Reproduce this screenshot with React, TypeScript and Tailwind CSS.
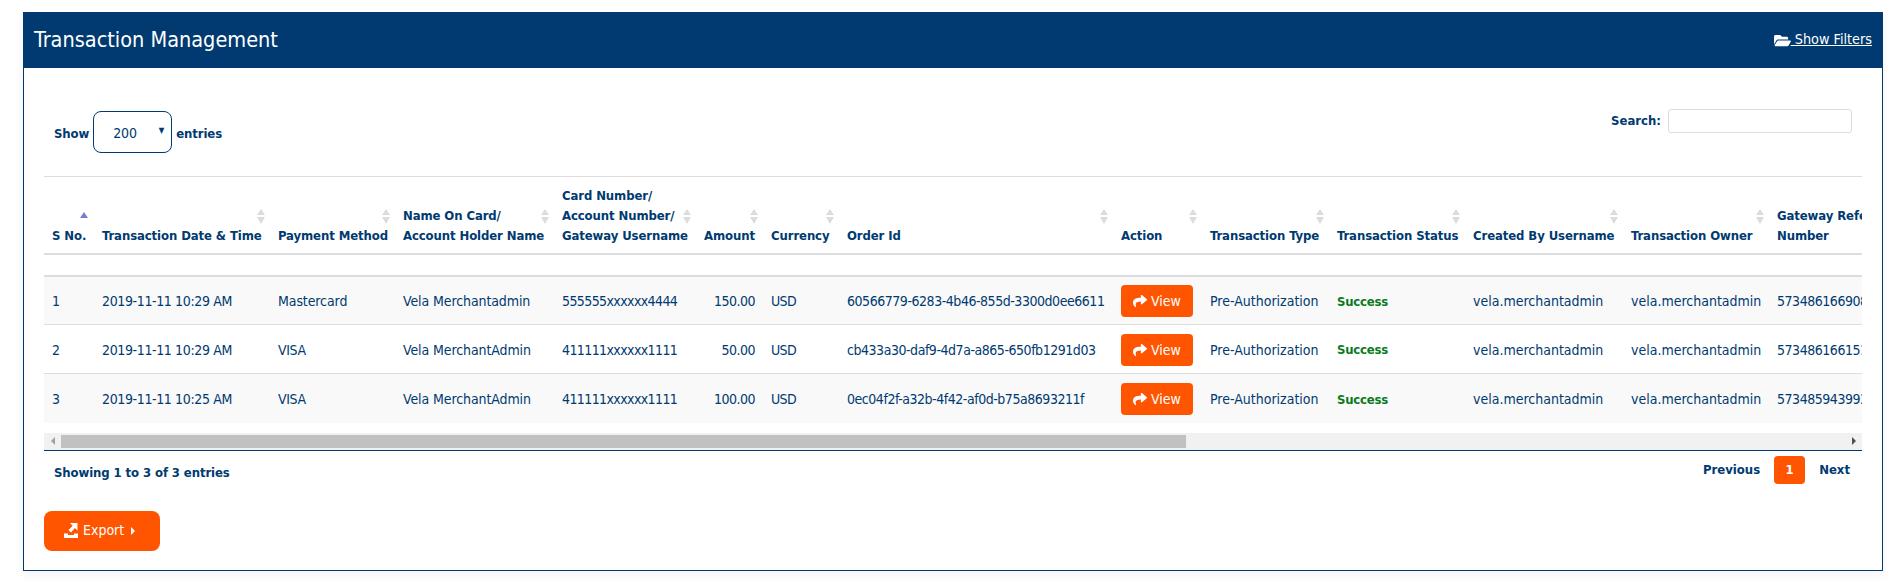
import { FaFolderOpen, FaShare } from "react-icons/fa";

const cols = [
  { w: "w-[50px]", label: ["S No."], active: true },
  { w: "w-[176px]", label: ["Transaction Date & Time"] },
  { w: "w-[125px]", label: ["Payment Method"] },
  { w: "w-[159px]", label: ["Name On Card/", "Account Holder Name"] },
  { w: "w-[142px]", label: ["Card Number/", "Account Number/", "Gateway Username"] },
  { w: "w-[67px]", label: ["Amount"] },
  { w: "w-[76px]", label: ["Currency"] },
  { w: "w-[274px]", label: ["Order Id"] },
  { w: "w-[89px]", label: ["Action"] },
  { w: "w-[127px]", label: ["Transaction Type"] },
  { w: "w-[136px]", label: ["Transaction Status"] },
  { w: "w-[158px]", label: ["Created By Username"] },
  { w: "w-[146px]", label: ["Transaction Owner"] },
  { w: "w-[93px]", label: ["Gateway Reference", "Number"], noIcon: true },
];

const rows = [
  ["1", "2019-11-11 10:29 AM", "Mastercard", "Vela Merchantadmin", "555555xxxxxx4444", "150.00", "60566779-6283-4b46-855d-3300d0ee6611", "573486166908"],
  ["2", "2019-11-11 10:29 AM", "VISA", "Vela MerchantAdmin", "411111xxxxxx1111", "50.00", "cb433a30-daf9-4d7a-a865-650fb1291d03", "573486166151"],
  ["3", "2019-11-11 10:25 AM", "VISA", "Vela MerchantAdmin", "411111xxxxxx1111", "100.00", "0ec04f2f-a32b-4f42-af0d-b75a8693211f", "573485943993"],
];

const cell = "px-2 whitespace-nowrap overflow-hidden";
const td = `${cell} pt-[2px] text-[14px]`;

function ExportIcon() {
  return (
    <svg viewBox="0 0 14 15" className="w-[14px] h-[15px]" fill="#fff">
      <path d="M0 10.5h4v1.5h6v-1.5h4V15H0z" />
      <path d="M6 0h7.5v7.5l-2.6-2.6L7 9.5 4.5 7l4.2-4.3z" />
    </svg>
  );
}

export default function App() {
  return (
    <div className="min-h-[583px] bg-white pt-3 pl-[23px] pr-[16px] text-[13px] text-[#003a70] font-['DejaVu_Sans_Condensed','DejaVu_Sans',sans-serif]">
      <div className="shadow-[0_4px_10px_rgba(0,0,0,0.05)]">
        <div className="h-14 bg-[#003a70] flex items-center justify-between pl-[11px] pr-[11px] text-white">
          <div className="text-[21.5px] leading-none">Transaction Management</div>
          <a className="flex items-center gap-0 text-[14.3px]">
            <FaFolderOpen className="w-[17px] h-[15px]" />
            <span className="underline whitespace-pre"> Show Filters</span>
          </a>
        </div>
        <div className="border-x border-b border-[#003a70] h-[503px] pl-5 pr-5">
          <div className="h-[108px] flex items-start justify-between pl-[10px] pr-[10px]">
            <div className="flex items-center gap-1 font-bold mt-[43px] tracking-[-0.1px]">
              <span className="pt-[3px]">Show</span>
              <div className="relative w-[79px] h-[42px] border border-[#003a70] rounded-lg flex items-center pl-[19px] pt-[2px] font-normal text-[14px]">
                200
                <span className="absolute right-[7px] top-[15px] text-[8px] leading-none">▼</span>
              </div>
              <span className="pt-[3px]">entries</span>
            </div>
            <div className="flex items-center gap-[7px] font-bold mt-[41px]">
              <span>Search:</span>
              <input className="w-[184px] h-6 border border-[#dddddd] rounded-[3px] bg-white" />
            </div>
          </div>

          <div className="w-[1818px] overflow-hidden">
            <table className="table-fixed border-collapse w-[1818px]">
              <thead>
                <tr className="h-[77px] border-t border-[#dddddd]">
                  {cols.map((c, i) => (
                    <th key={i} className={`${c.w} ${cell} relative align-bottom pb-[7px] text-left font-bold leading-5 tracking-[-0.1px]`}>
                      {c.label.map((l) => (
                        <div key={l}>{l}</div>
                      ))}
                      {c.active ? (
                        <svg viewBox="0 0 8 6" className="absolute top-[35px] left-[36px] w-2 h-[6px]">
                          <path d="M4 0l4 6H0z" fill="#7b7bd6" />
                        </svg>
                      ) : c.noIcon ? null : (
                        <svg viewBox="0 0 8 15" className="absolute top-[32px] right-[5px] w-2 h-[15px]">
                          <path d="M4 0l4 6H0z M4 15L0 8h8z" fill="#dcdcdc" />
                        </svg>
                      )}
                    </th>
                  ))}
                </tr>
              </thead>
              <tbody>
                <tr className="h-[22px] border-y-2 border-[#dddddd]">
                  <td colSpan={14} />
                </tr>
                {rows.map((r, i) => (
                  <tr key={r[0]} className={`h-[49px] ${i % 2 === 0 ? "bg-[#f9f9f9]" : "bg-white"} ${i < 2 ? "border-b border-[#dddddd]" : ""}`}>
                    <td className={td}>{r[0]}</td>
                    <td className={`${td} tracking-[-0.37px]`}>{r[1]}</td>
                    <td className={`${td} ${r[2] === "VISA" ? "tracking-[-0.4px]" : "tracking-[-0.1px]"}`}>{r[2]}</td>
                    <td className={`${td} tracking-[-0.1px]`}>{r[3]}</td>
                    <td className={`${td} tracking-[-0.6px]`}>{r[4]}</td>
                    <td className={`${td} text-right tracking-[-0.5px]`}>{r[5]}</td>
                    <td className={`${td} tracking-[-0.6px]`}>USD</td>
                    <td className={`${td} tracking-[-0.46px]`}>{r[6]}</td>
                    <td className={td}>
                      <div className="w-[72px] h-8 bg-[#ff5500] rounded text-white text-[14px] flex items-center justify-center gap-[4px]">
                        <FaShare className="w-[14px] h-[14px]" />
                        <span>View</span>
                      </div>
                    </td>
                    <td className={td}>Pre-Authorization</td>
                    <td className={`${cell} pt-[2px] font-bold text-[#0a7a1e] tracking-[-0.2px]`}>Success</td>
                    <td className={td}>vela.merchantadmin</td>
                    <td className={td}>vela.merchantadmin</td>
                    <td className="pl-2 pt-[2px] text-[14px] tracking-[-0.46px] whitespace-nowrap overflow-hidden">{r[7]}</td>
                  </tr>
                ))}
              </tbody>
            </table>
          </div>

          <div className="mt-[10px] h-[18px] w-[1818px] bg-[#f1f1f1] border-b border-[#003a70] flex items-center">
            <div className="w-[17px] flex justify-center">
              <svg viewBox="0 0 4 8" className="w-1 h-2"><path d="M4 0v8L0 4z" fill="#a0a0a0" /></svg>
            </div>
            <div className="w-[1125px] h-[13px] bg-[#c1c1c1]" />
            <div className="flex-1 flex justify-end pr-[6px]">
              <svg viewBox="0 0 4 8" className="w-1 h-2"><path d="M0 0v8l4-4z" fill="#505050" /></svg>
            </div>
          </div>

          <div className="w-[1818px] flex items-start justify-between pl-[10px] pr-[12px] pt-[5px] h-[60px]">
            <div className="font-bold mt-[7px] tracking-[-0.1px]">Showing 1 to 3 of 3 entries</div>
            <div className="flex items-center gap-[14px] font-bold">
              <span>Previous</span>
              <span className="w-[31px] h-7 bg-[#ff5500] rounded-sm text-white flex items-center justify-center">1</span>
              <span>Next</span>
            </div>
          </div>

          <div className="w-[116px] h-10 bg-[#ff5500] rounded-lg text-white text-[14px] flex items-center pl-5 gap-[5px]">
            <ExportIcon />
            <span>Export</span>
            <svg viewBox="0 0 4 8" className="w-1 h-2 ml-[2px]"><path d="M0 0v8l4-4z" fill="#fff" /></svg>
          </div>
        </div>
      </div>
    </div>
  );
}
